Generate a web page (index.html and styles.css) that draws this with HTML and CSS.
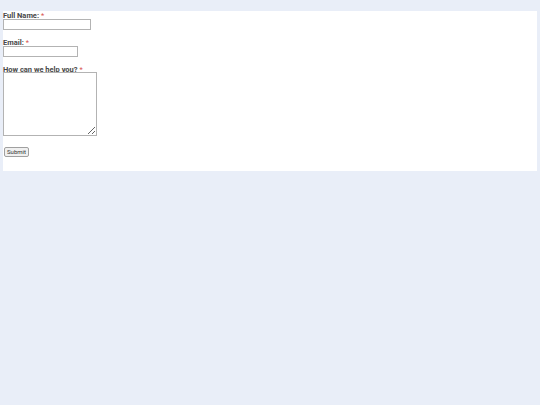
FILE: index.html
```html
<!DOCTYPE html>
<html>
<head>
<meta charset="utf-8">
<link rel="stylesheet" href="styles.css">
</head>
<body>
<form class="panel">
  <div class="field">
    <label class="label">Full Name: <span class="req">*</span></label>
    <input class="input name" type="text">
  </div>
  <div class="field">
    <label class="label">Email: <span class="req">*</span></label>
    <input class="input email" type="text">
  </div>
  <div class="field">
    <label class="label">How can we help you? <span class="req">*</span></label>
    <textarea class="area"></textarea>
  </div>
  <div class="actions">
    <button class="btn" type="button">Submit</button>
  </div>
</form>
</body>
</html>
```
FILE: styles.css
```css
html, body {
  margin: 0;
  padding: 0;
  background: #e9eef8;
}
body {
  font-family: Roboto, "Liberation Sans", sans-serif;
}
.panel {
  background: #fff;
  margin: 11px 3px 0 3px;
  padding: 0 0 14px 0;
  display: flex;
  flex-direction: column;
}
.field {
  display: flex;
  flex-direction: column;
  align-items: flex-start;
  margin-bottom: 8px;
}
.label {
  font-size: 7.5px;
  line-height: 9px;
  font-weight: bold;
  color: #484848;
  height: 8px;
}
.req {
  color: #d9534f;
  font-weight: normal;
}
.input {
  box-sizing: border-box;
  height: 11px;
  border: 1px solid #b3b3b3;
  padding: 0;
  margin: 0;
  font-size: 7px;
  background: #fff;
}
.name { width: 88px; }
.email { width: 75px; }
.area {
  box-sizing: border-box;
  width: 94px;
  height: 64px;
  border: 1px solid #b3b3b3;
  padding: 0;
  margin: -1px 0 0 0;
  font-size: 7px;
}
.actions {
  display: flex;
  margin-top: 3px;
  padding-left: 1px;
}
.btn {
  box-sizing: border-box;
  height: 10px;
  width: 25px;
  padding: 0;
  font-family: Roboto, "Liberation Sans", sans-serif;
  font-size: 6px;
  line-height: 8px;
  color: #333;
  background: #f0f0f0;
  border: 1px solid #a0a0a0;
  border-radius: 2px;
}
```
